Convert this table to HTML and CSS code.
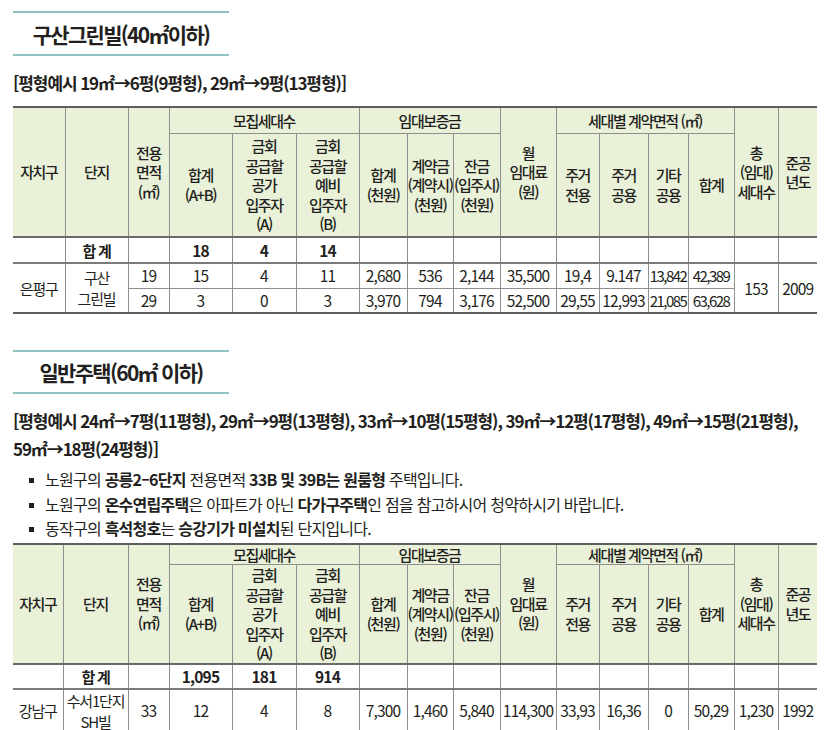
FILE: index.html
```html
<!DOCTYPE html>
<html lang="ko">
<head>
<meta charset="utf-8">
<title>임대주택 안내</title>
<link rel="stylesheet" href="styles.css">
</head>
<body>
<div class="page">
  <section class="sec sec1">
    <h2 class="title">구산그린빌(40㎡이하)</h2>
    <p class="example">[평형예시 19㎡→6평(9평형), 29㎡→9평(13평형)]</p>
    <table class="grid g1">
      <colgroup>
        <col class="c1"><col class="c2"><col class="c3"><col class="c4"><col class="c5"><col class="c6"><col class="c7"><col class="c8"><col class="c9"><col class="c10"><col class="c11"><col class="c12"><col class="c13"><col class="c14"><col class="c15"><col class="c16">
      </colgroup>
      <thead>
        <tr class="hr1">
          <th rowspan="2">자치구</th>
          <th rowspan="2">단지</th>
          <th rowspan="2">전용<br>면적<br>(㎡)</th>
          <th colspan="3">모집세대수</th>
          <th colspan="3">임대보증금</th>
          <th rowspan="2">월<br>임대료<br>(원)</th>
          <th colspan="4">세대별 계약면적 (㎡)</th>
          <th rowspan="2">총<br>(임대)<br>세대수</th>
          <th rowspan="2">준공<br>년도</th>
        </tr>
        <tr class="hr2">
          <th>합계<br>(A+B)</th>
          <th>금회<br>공급할<br>공가<br>입주자<br>(A)</th>
          <th>금회<br>공급할<br>예비<br>입주자<br>(B)</th>
          <th>합계<br>(천원)</th>
          <th>계약금<br>(계약시)<br>(천원)</th>
          <th>잔금<br>(입주시)<br>(천원)</th>
          <th>주거<br>전용</th>
          <th>주거<br>공용</th>
          <th>기타<br>공용</th>
          <th>합계</th>
        </tr>
      </thead>
      <tbody>
        <tr class="total">
          <td></td><td class="ko strong">합 계</td><td></td>
          <td class="strong">18</td><td class="strong">4</td><td class="strong">14</td>
          <td></td><td></td><td></td><td></td><td></td><td></td><td></td><td></td><td></td><td></td>
        </tr>
        <tr class="drow">
          <td rowspan="2" class="ko">은평구</td>
          <td rowspan="2" class="ko two">구산<br>그린빌</td>
          <td>19</td><td>15</td><td>4</td><td>11</td>
          <td>2,680</td><td>536</td><td>2,144</td><td>35,500</td>
          <td>19,4</td><td>9.147</td><td class="sm">13,842</td><td class="sm">42,389</td>
          <td rowspan="2">153</td><td rowspan="2">2009</td>
        </tr>
        <tr class="drow">
          <td>29</td><td>3</td><td>0</td><td>3</td>
          <td>3,970</td><td>794</td><td>3,176</td><td>52,500</td>
          <td>29,55</td><td>12,993</td><td class="sm">21,085</td><td class="sm">63,628</td>
        </tr>
      </tbody>
    </table>
  </section>

  <section class="sec sec2">
    <h2 class="title">일반주택(60㎡ 이하)</h2>
    <p class="example">[평형예시 24㎡→7평(11평형), 29㎡→9평(13평형), 33㎡→10평(15평형), 39㎡→12평(17평형), 49㎡→15평(21평형),<br>59㎡→18평(24평형)]</p>
    <ul class="notes">
      <li>노원구의 <strong>공릉2–6단지</strong> 전용면적 <strong>33B 및 39B는 원룸형</strong> 주택입니다.</li>
      <li>노원구의 <strong>온수연립주택</strong>은 아파트가 아닌 <strong>다가구주택</strong>인 점을 참고하시어 청약하시기 바랍니다.</li>
      <li>동작구의 <strong>흑석청호</strong>는 <strong>승강기가 미설치</strong>된 단지입니다.</li>
    </ul>
    <table class="grid g2">
      <colgroup>
        <col class="c1"><col class="c2"><col class="c3"><col class="c4"><col class="c5"><col class="c6"><col class="c7"><col class="c8"><col class="c9"><col class="c10"><col class="c11"><col class="c12"><col class="c13"><col class="c14"><col class="c15"><col class="c16">
      </colgroup>
      <thead>
        <tr class="hr1">
          <th rowspan="2">자치구</th>
          <th rowspan="2">단지</th>
          <th rowspan="2">전용<br>면적<br>(㎡)</th>
          <th colspan="3">모집세대수</th>
          <th colspan="3">임대보증금</th>
          <th rowspan="2">월<br>임대료<br>(원)</th>
          <th colspan="4">세대별 계약면적 (㎡)</th>
          <th rowspan="2">총<br>(임대)<br>세대수</th>
          <th rowspan="2">준공<br>년도</th>
        </tr>
        <tr class="hr2">
          <th>합계<br>(A+B)</th>
          <th>금회<br>공급할<br>공가<br>입주자<br>(A)</th>
          <th>금회<br>공급할<br>예비<br>입주자<br>(B)</th>
          <th>합계<br>(천원)</th>
          <th>계약금<br>(계약시)<br>(천원)</th>
          <th>잔금<br>(입주시)<br>(천원)</th>
          <th>주거<br>전용</th>
          <th>주거<br>공용</th>
          <th>기타<br>공용</th>
          <th>합계</th>
        </tr>
      </thead>
      <tbody>
        <tr class="total">
          <td></td><td class="ko strong">합 계</td><td></td>
          <td class="strong">1,095</td><td class="strong">181</td><td class="strong">914</td>
          <td></td><td></td><td></td><td></td><td></td><td></td><td></td><td></td><td></td><td></td>
        </tr>
        <tr class="drow tall">
          <td class="ko">강남구</td>
          <td class="ko two">수서1단지<br>SH빌</td>
          <td>33</td><td>12</td><td>4</td><td>8</td>
          <td>7,300</td><td>1,460</td><td>5,840</td><td>114,300</td>
          <td>33,93</td><td>16,36</td><td>0</td><td>50,29</td>
          <td>1,230</td><td>1992</td>
        </tr>
      </tbody>
    </table>
  </section>
</div>
</body>
</html>
```
FILE: styles.css
```css
* {
  box-sizing: border-box;
}

html, body {
  margin: 0;
  background: #ffffff;
}

body {
  color: #231f20;
  font-family: "Noto Sans CJK KR", "Liberation Sans", sans-serif;
}

.page {
  width: 830px;
  padding: 11px 0 0 13px;
}

.sec2 {
  margin-top: 36px;
}

.title {
  width: 216px;
  height: 45px;
  margin: 0;
  display: flex;
  align-items: center;
  justify-content: center;
  border-top: 2px solid #93c2c4;
  border-bottom: 2px solid #93c2c4;
  font-size: 21px;
  font-weight: 700;
  letter-spacing: -1.7px;
}

.sec2 .title {
  height: 44px;
}

.example {
  margin: 13px 0 0;
  font-size: 17px;
  line-height: 28px;
  font-weight: 700;
  letter-spacing: -1.1px;
}

.sec1 .example {
  margin-bottom: 9px;
}

.notes {
  list-style: none;
  margin: 4px 0 2px;
  padding: 0 0 0 16px;
  font-size: 16px;
  line-height: 24.5px;
  letter-spacing: -0.75px;
}

.notes li::before {
  content: "";
  display: inline-block;
  width: 5px;
  height: 5px;
  margin-right: 11px;
  background: #231f20;
  vertical-align: 3px;
}

.notes strong {
  font-weight: 700;
}

/* tables */
.grid {
  width: 804px;
  table-layout: fixed;
  border-collapse: collapse;
  border-top: 2px solid #5e5e5e;
  border-bottom: 2px solid #5e5e5e;
  border-left: hidden;
  border-right: hidden;
}

.c1 { width: 52px; }
.c2 { width: 63px; }
.c3 { width: 41px; }
.c4 { width: 63px; }
.c5 { width: 64px; }
.c6 { width: 63px; }
.c7 { width: 48px; }
.c8 { width: 46px; }
.c9 { width: 47px; }
.c10 { width: 56px; }
.c11 { width: 43px; }
.c12 { width: 49px; }
.c13 { width: 40px; }
.c14 { width: 46px; }
.c15 { width: 44px; }
.c16 { width: 39px; }

.g2 .c1 { width: 50px; }
.g2 .c2 { width: 65px; }

.grid th,
.grid td {
  padding: 0;
  border: 1px solid #8e8e8e;
  text-align: center;
  vertical-align: middle;
  white-space: nowrap;
}

.grid th {
  background: #e9f1d9;
  font-size: 15px;
  font-weight: 500;
  line-height: 19.5px;
  letter-spacing: -1.4px;
}

.grid td {
  font-size: 15.5px;
  line-height: 21px;
  letter-spacing: -0.8px;
}

.grid td.sm {
  font-size: 15px;
  letter-spacing: -1.5px;
}

.grid td.ko {
  font-size: 15px;
  letter-spacing: -1.2px;
}

.grid td.strong {
  font-weight: 700;
}

.grid tbody tr:first-child td {
  border-top: 2px solid #6a6a6a;
}

.grid .total td {
  border-bottom: 2px solid #7a7a7a;
}

.g1 .hr1 { height: 26px; }
.g1 .hr2 { height: 104px; }
.g1 .total { height: 26px; }
.g1 .drow { height: 25px; }

.g2 .hr1 { height: 21px; }
.g2 .hr2 { height: 97px; }
.g2 .total { height: 25px; }
.g2 .tall { height: 38px; }
```
